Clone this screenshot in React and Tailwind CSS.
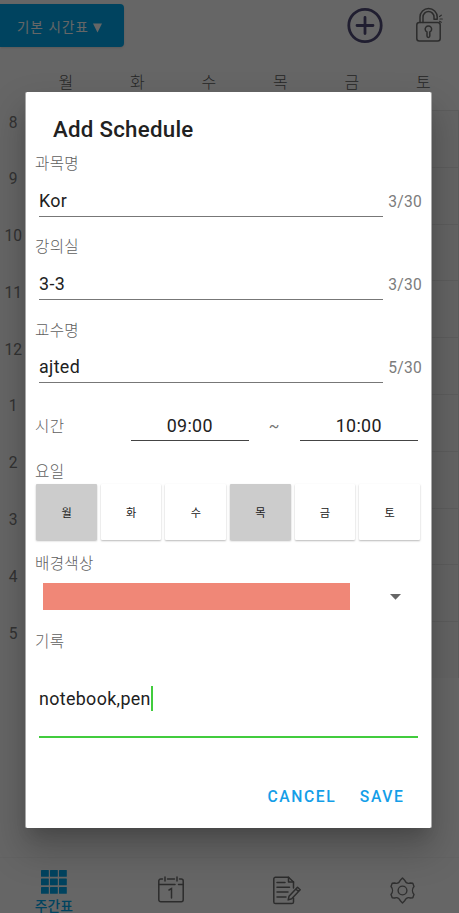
import React from "react";

const DAYS = ["월", "화", "수", "목", "금", "토"];
const HOURS = [8, 9, 10, 11, 12, 1, 2, 3, 4, 5];
const SELECTED_DAYS = ["월", "목"];

const fields = [
    { label: "과목명", value: "Kor", count: "3/30" },
    { label: "강의실", value: "3-3", count: "3/30" },
    { label: "교수명", value: "ajted", count: "5/30" },
];

export default function App() {
    return (
        <div className="relative h-[913px] w-[459px] overflow-hidden bg-white font-[Roboto,'Noto_Sans_CJK_KR',sans-serif]">
            <Timetable />
            <div className="absolute inset-0 bg-black/60 pt-[92px] pl-[25px]">
                <ScheduleDialog />
            </div>
        </div>
    );
}

const Timetable = () => (
    <div className="flex h-full flex-col">
        <header className="flex h-[68px] items-start justify-between pr-[15px]">
            <button className="mt-1 flex h-[43px] w-[123.5px] items-center rounded-[4px] rounded-l-none bg-[#00a9ee] pt-[5px] pl-[17px] text-[13.4px] font-normal tracking-[1.2px] whitespace-nowrap text-white shadow">
                기본 시간표
                <svg className="mt-[-1px] ml-[4px]" width="9" height="10" viewBox="0 0 9 10" fill="currentColor">
                    <path d="M0 0.5h9L4.5 9.5z" />
                </svg>
            </button>
            <div className="flex gap-[32px] pt-[7px]">
                <PlusIcon />
                <UnlockIcon />
            </div>
        </header>

        <div className="flex h-[42px] pl-[30px] text-[16px] leading-[30px] font-light text-[#5c5c5c]">
            {DAYS.map((day) => (
                <span key={day} className="w-[71.5px] shrink-0 text-center">{day}</span>
            ))}
        </div>

        <div className="h-[568px]">
            {HOURS.map((hour) => (
                <div key={hour} className="flex h-[56.8px]">
                    <span className="w-[29.5px] pr-[3px] pt-[1.5px] text-center text-[15.6px] leading-[22px] text-[#808080]">{hour}</span>
                    {DAYS.map((day) => (
                        <span key={day} className="w-[71.5px] shrink-0 border-t border-r border-[#e9e9e9] bg-[#fafafa]" />
                    ))}
                </div>
            ))}
        </div>

        <nav className="mt-auto grid h-[56px] grid-cols-4 border-t border-[#f7f7f7]">
            <div className="flex flex-col items-center pt-[11.5px] pr-[7px] text-[#00a9ee]">
                <GridIcon />
                <span className="mt-[1px] text-[13.8px] leading-[22px] font-medium">주간표</span>
            </div>
            <div className="flex justify-center pt-[17px] pr-[3px]"><CalendarIcon /></div>
            <div className="flex justify-center pt-[18px]"><NoteIcon /></div>
            <div className="flex justify-center pt-[18.5px] pl-[2px]"><GearIcon /></div>
        </nav>
    </div>
);

const ScheduleDialog = () => (
    <div className="flex h-[736px] w-[407px] flex-col rounded-[2px] border-x border-[#a8a8a8] bg-white px-[9px] text-[15.6px] tracking-[0.28px] text-[#757575] shadow-[0_11px_15px_-7px_rgba(0,0,0,0.15),0_20px_36px_3px_rgba(0,0,0,0.22)]">
        <h2 className="h-[60px] pt-[20.5px] pl-[18px] text-[22.3px] leading-[32px] font-medium tracking-[0.25px] text-[#212121]">Add Schedule</h2>

        {fields.map((field) => (
            <div key={field.label} className="h-[83.1px]">
                <Label className="h-[25px] pt-[0.4px]">{field.label}</Label>
                <div className="flex items-start pl-[4px]">
                    <div className="h-[40px] w-[346px] border-b border-[#777] pt-[12px] text-[17.85px] leading-[24px] tracking-[0.35px] text-[#212121]">{field.value}</div>
                    <span className="ml-[5px] pt-[13px] leading-[24px] text-[#7c7c7c]">{field.count}</span>
                </div>
            </div>
        ))}

        <div className="flex h-[59px] items-start">
            <Label className="w-[95.5px] pt-[14px]">시간</Label>
            <Time value="09:00" />
            <span className="w-[50.5px] pt-[14px] text-center leading-[24px]">~</span>
            <Time value="10:00" />
        </div>

        <Label>요일</Label>
        <div className="mt-[-1px] flex gap-[4px] pl-[1.3px]">
            {DAYS.map((day) => (
                <button
                    key={day}
                    className={`h-[55.5px] w-[60.6px] rounded-[1px] pt-[4px] text-[11.2px] font-normal tracking-[0px] text-[#212121] shadow-[0_1px_2px_rgba(0,0,0,0.28)] ${
                        SELECTED_DAYS.includes(day) ? "bg-[#cccccc]" : "bg-white"
                    }`}
                >
                    {day}
                </button>
            ))}
        </div>

        <Label className="mt-[12px]">배경색상</Label>
        <div className="mt-[6.5px] flex items-center pl-[8px]">
            <div className="h-[27px] w-[306.5px] bg-[#f08777]" />
            <svg className="ml-[40px]" width="11" height="6" viewBox="0 0 11 6" fill="#666">
                <path d="M0 0h11L5.5 5.8z" />
            </svg>
        </div>

        <Label className="mt-[19.5px]">기록</Label>
        <div className="ml-[4px] flex h-[83.5px] w-[379px] border-b-2 border-[#41cc3d] pt-[31.5px] text-[17.85px] leading-[26px] tracking-[0.35px] text-[#212121]">
            notebook,pen
            <span className="h-[25px] w-[2px] bg-[#41cc3d]" />
        </div>

        <div className="mt-[46px] flex justify-end gap-[23.5px] pr-[17.5px] text-[15.7px] leading-[26px] font-medium tracking-[1.6px] text-[#149ee8]">
            <span>CANCEL</span>
            <span>SAVE</span>
        </div>
    </div>
);

const Label = ({ className = "", children }) => (
    <div className={`leading-[25px] font-light text-[#606060] ${className}`}>{children}</div>
);

const Time = ({ value }) => (
    <div className="h-[39.5px] w-[118.5px] border-b border-[#444] pt-[13px] text-center text-[17.85px] leading-[24px] tracking-[0.3px] text-[#212121]">
        {value}
    </div>
);

const PlusIcon = () => (
    <svg width="37" height="37" viewBox="0 0 37 37" fill="none" stroke="#514c78" strokeWidth="2.8" strokeLinecap="round">
        <circle cx="18" cy="18.5" r="16.2" />
        <path d="M18 10.5v16M10 18.5h16" />
    </svg>
);

const UnlockIcon = () => (
    <svg width="28" height="37" viewBox="0 0 28 37" fill="none" stroke="#6e6e6e" strokeWidth="1.5" strokeLinecap="round" strokeLinejoin="round">
        <rect x="0.8" y="15.5" width="23.4" height="18.5" rx="2.5" />
        <path d="M4 15.5V10a8.6 8.6 0 0 1 17.2 0v2.300h-3.200V10a5.500 5.500 0 0 0-11 0v5.500" />
        <path d="M11 25a3.200 3.200 0 1 1 2.800 0v4a1.400 1.400 0 0 1-2.800 0z" />
        <path d="M23.500 9.500l1.800-1.300M24 12h2.300M23.500 14.300l1.800 1" strokeWidth="1.2" />
    </svg>
);

const GridIcon = () => (
    <svg width="26" height="24" viewBox="0 0 26 24" fill="currentColor">
        {[0, 8.5, 17].map((y) =>
            [0, 9, 18].map((x) => <rect key={`${x}-${y}`} x={x} y={y} width="7.8" height="6.8" rx="0.5" />)
        )}
    </svg>
);

const CalendarIcon = () => (
    <svg width="26" height="28" viewBox="0 0 26 28" fill="none" stroke="#6e6e6e" strokeWidth="1.5" strokeLinecap="round">
        <path d="M4.5 4H2.8A2 2 0 0 0 .8 6v18.7a2 2 0 0 0 2 2h20.400a2 2 0 0 0 2-2V6a2 2 0 0 0-2-2H21.500M9.500 4h7M7 2v4M19 2v4" />
        <path d="M1 9.500h16M20.500 9.500h4.500" />
        <path d="M11 15l2.500-1.500v9.500" />
    </svg>
);

const NoteIcon = () => (
    <svg width="28" height="29" viewBox="0 0 28 29" fill="none" stroke="#6e6e6e" strokeWidth="1.5" strokeLinecap="round" strokeLinejoin="round">
        <path d="M20.500 12V6l-5-4.800H2.500a1.700 1.700 0 0 0-1.700 1.700v23a1.700 1.700 0 0 0 1.700 1.700h16.300a1.700 1.700 0 0 0 1.700-1.700V22" />
        <path d="M15.500 1.200V6h5" />
        <path d="M4 6.500h8M4 11.200h12.500M4 16h11M4 21h9" />
        <path d="M16 20.300l8.500-9 2.700 2.400-8.500 9-3.500 1.200zM22.800 13l2.700 2.500" />
    </svg>
);

const GearIcon = () => (
    <svg width="25" height="27" viewBox="0 0 25 27" fill="none" stroke="#777" strokeWidth="1.4" strokeLinejoin="round">
        <path d="M10.300 3.300L12.500 1l2.200 2.300c1 2.400 3.300 3.600 5.700 2.700l2.400.3 1.200 3.200c-2 2.300-2 5.700 0 8l-1.200 3.200-2.400.3c-2.400-.9-4.700.3-5.700 2.700L12.500 26l-2.200-2.300c-1-2.400-3.300-3.600-5.700-2.700l-2.400-.3L1 17.500c2-2.300 2-5.700 0-8l1.200-3.200 2.400-.3c2.400.9 4.700-.3 5.700-2.700z" />
        <circle cx="12.500" cy="13.500" r="4.400" />
    </svg>
);
